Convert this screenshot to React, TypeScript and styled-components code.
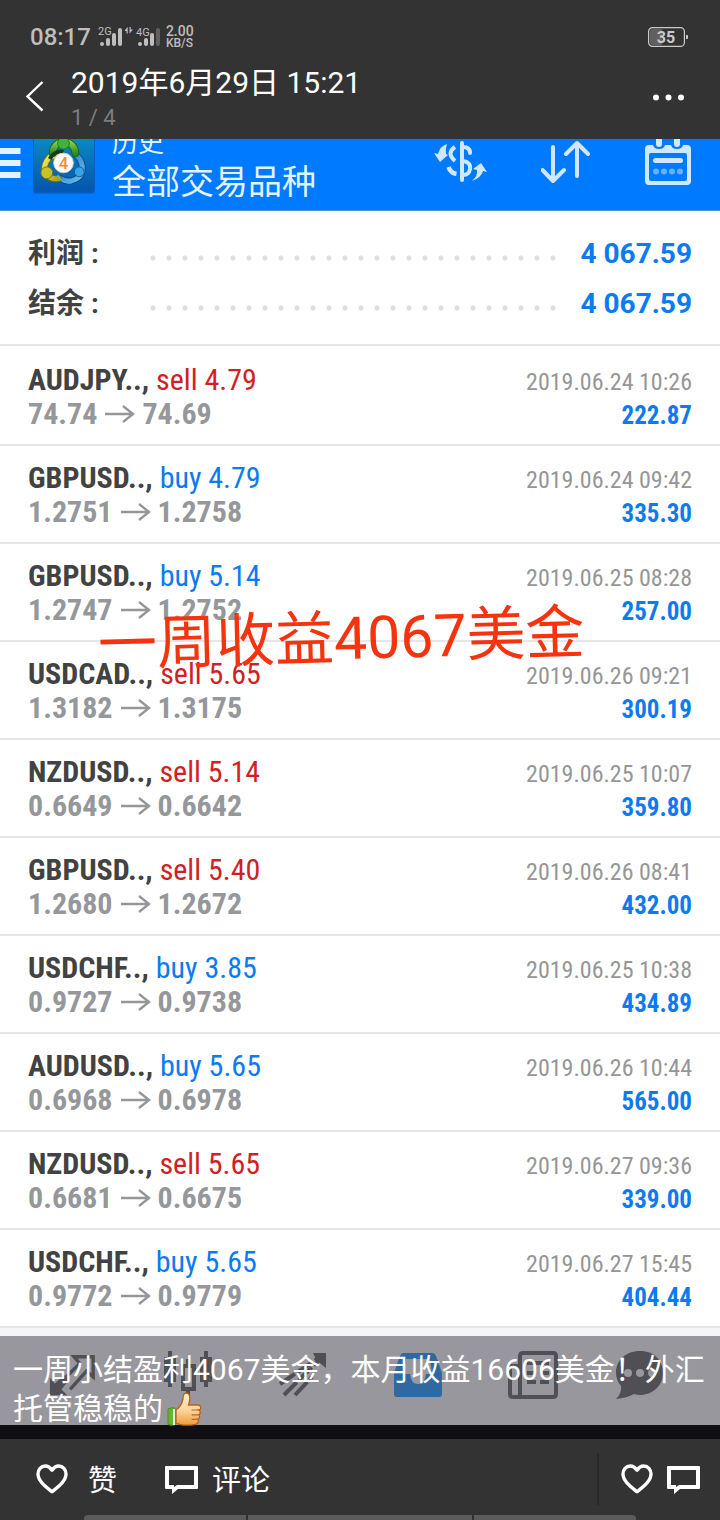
import React from "react";
import styled, { createGlobalStyle } from "styled-components";

const GlobalStyle = createGlobalStyle`
  *, *::before, *::after { box-sizing: border-box; }
  body {
    margin: 0;
    background: #333;
    font-family: Roboto, "Noto Sans CJK SC", sans-serif;
    color: #fff;
  }
  button { font: inherit; color: inherit; background: none; border: 0; padding: 0; cursor: pointer; }
  h1, h2, p, ul, dl, dd, dt { margin: 0; padding: 0; font-weight: 400; }
  svg { display: block; }
`;

const Page = styled.div`
  display: flex;
  flex-direction: column;
  min-height: 100vh;
  overflow: hidden;
`;

/* ---------- viewer header ---------- */
const Header = styled.header`
  background: #333;
`;
const StatusBar = styled.div`
  display: flex;
  align-items: center;
  height: 62px;
  padding: 12px 32px 0 30px;
  color: #bebebe;
`;
const Clock = styled.span`
  font-size: 24px;
  line-height: 28px;
  font-weight: 500;
`;
const Signals = styled.svg`
  margin-left: 7px;
`;
const Speed = styled.div`
  margin-left: 5px;
  font-size: 12px;
  line-height: 12px;
  font-weight: 500;
`;
const SpeedValue = styled.div`
  font-size: 14px;
`;
const Battery = styled.svg`
  margin-left: auto;
`;
const TitleBar = styled.div`
  display: flex;
  align-items: center;
  height: 77px;
  padding: 0 34px 8px 24px;
`;
const Titles = styled.div`
  flex: 1;
  margin-left: 24px;
`;
const Title = styled.h1`
  font-size: 30px;
  line-height: 42px;
`;
const Counter = styled.p`
  font-size: 22px;
  line-height: 28px;
  color: #7d7d7d;
`;
const IconButton = styled.button`
  display: flex;
  align-items: center;
  flex: none;
`;

/* ---------- trading screen ---------- */
const Screen = styled.main`
  position: relative;
  background: #fff;
`;
const AppBar = styled.div`
  display: flex;
  align-items: flex-end;
  height: 72px;
  padding-right: 29px;
  overflow: hidden;
  background: #007aff;
  border-bottom: 1px solid #4a94e6;
`;
const Logo = styled.svg`
  margin: 0 17px 16px 12px;
  flex: none;
`;
const AppTitles = styled.div`
  flex: 1;
  color: #e2f2ff;
  margin-bottom: 4px;
`;
const AppName = styled.p`
  font-size: 26px;
  line-height: 30px;
`;
const AppSection = styled.h2`
  font-size: 34px;
  line-height: 48px;
`;
const Tools = styled.div`
  display: flex;
  align-items: flex-start;
  height: 71px;
  gap: 54px;
`;

const Summary = styled.dl`
  padding: 18px 28px 15px;
  border-bottom: 2px solid #e6e6e6;
`;
const SummaryRow = styled.div`
  display: flex;
  align-items: center;
  height: 50px;
  font-size: 28px;
  line-height: 40px;
`;
const SummaryLabel = styled.dt`
  width: 117px;
  color: #424242;
  font-weight: 700;
`;
const Dots = styled.span`
  flex: 1;
  height: 6px;
  margin: 8px 24px 0 0;
  background: radial-gradient(circle at 8px 3px, #dedede 2px, transparent 3px) 0 0 / 16px 6px repeat-x;
`;
const SummaryValue = styled.dd`
  font-weight: 700;
  color: #0c7af0;
`;

const Trades = styled.ul`
  list-style: none;
  padding-top: 2px;
`;
const Trade = styled.li`
  display: flex;
  justify-content: space-between;
  height: 98px;
  padding: 15px 28px 0;
  border-bottom: 2px solid #e6e6e6;
  font-family: "Roboto Condensed", "Liberation Sans Narrow", Roboto, sans-serif;
  font-size: 30px;
  line-height: 34px;
  white-space: nowrap;
`;
const Symbol = styled.div`
  font-weight: 700;
  color: #424242;
`;
const Side = styled.span<{ $side: "buy" | "sell" }>`
  font-weight: 400;
  color: ${(p) => (p.$side === "buy" ? "#0c7af0" : "#d01f26")};
`;
const Prices = styled.div`
  display: flex;
  align-items: center;
  gap: 7px;
  font-weight: 700;
  color: #96979a;
`;
const Outcome = styled.div`
  font-size: 24px;
  text-align: right;
  padding-top: 2px;
`;
const When = styled.div`
  color: #969696;
`;
const Profit = styled.div`
  font-size: 25px;
  font-weight: 700;
  color: #0c7af0;
`;
const Stamp = styled.p`
  position: absolute;
  left: 50%;
  top: 460px;
  transform: translateX(-262px) rotate(-1.5deg);
  font-size: 59px;
  line-height: 80px;
  color: #f5330f;
  white-space: nowrap;
`;

const TabArea = styled.div`
  position: relative;
  border-top: 8px solid #f5f5f6;
  border-bottom: 14px solid #0f0e13;
`;
const Tabs = styled.nav`
  display: grid;
  grid-template-columns: repeat(6, 1fr);
  justify-items: center;
  height: 89px;
  padding: 14px 15px 0;
  background: #98979d;
  color: #4f4f55;
`;
const TabButton = styled.button`
  display: flex;
  align-items: flex-start;
`;
const Caption = styled.p`
  position: absolute;
  inset: 14px 0 auto;
  padding: 0 13px;
  font-size: 30px;
  line-height: 39px;
  overflow-wrap: anywhere;
`;
const Thumb = styled.svg`
  display: inline-block;
  vertical-align: -7px;
  margin-left: 4px;
`;

/* ---------- viewer footer ---------- */
const Footer = styled.footer`
  display: flex;
  align-items: center;
  height: 76px;
  padding: 4px 20px 0 36px;
  background: #333;
`;
const Action = styled.button`
  display: flex;
  align-items: center;
  gap: 14px;
  margin-right: 48px;
  font-size: 29px;
  line-height: 40px;
`;
const Label = styled.span`
  padding-top: 4px;
`;
const Likes = styled(Action)`
  gap: 20px;
`;
const Totals = styled.div`
  display: flex;
  align-items: center;
  gap: 14px;
  height: 52px;
  margin-left: auto;
  padding-left: 22px;
  border-left: 2px solid #292929;
`;
const Handles = styled.div`
  display: grid;
  grid-template-columns: 162fr 224fr 162fr;
  gap: 2px;
  height: 5px;
  margin: 0 84px;
  overflow: hidden;
  border-radius: 4px 4px 0 0;
`;
const Handle = styled.span`
  background: #5b5b5b;
`;

type TradeData = [string, "buy" | "sell", string, string, string, string, string];
const trades: TradeData[] = [
  ["AUDJPY..,", "sell", "4.79", "74.74", "74.69", "2019.06.24 10:26", "222.87"],
  ["GBPUSD..,", "buy", "4.79", "1.2751", "1.2758", "2019.06.24 09:42", "335.30"],
  ["GBPUSD..,", "buy", "5.14", "1.2747", "1.2752", "2019.06.25 08:28", "257.00"],
  ["USDCAD..,", "sell", "5.65", "1.3182", "1.3175", "2019.06.26 09:21", "300.19"],
  ["NZDUSD..,", "sell", "5.14", "0.6649", "0.6642", "2019.06.25 10:07", "359.80"],
  ["GBPUSD..,", "sell", "5.40", "1.2680", "1.2672", "2019.06.26 08:41", "432.00"],
  ["USDCHF..,", "buy", "3.85", "0.9727", "0.9738", "2019.06.25 10:38", "434.89"],
  ["AUDUSD..,", "buy", "5.65", "0.6968", "0.6978", "2019.06.26 10:44", "565.00"],
  ["NZDUSD..,", "sell", "5.65", "0.6681", "0.6675", "2019.06.27 09:36", "339.00"],
  ["USDCHF..,", "buy", "5.65", "0.9772", "0.9779", "2019.06.27 15:45", "404.44"],
];

const HeartIcon = () => (
  <svg width="32" height="30" viewBox="0 0 32 30" fill="none" stroke="#fff" strokeWidth="3.4" strokeLinejoin="round" aria-hidden="true">
    <path d="M16 6.2C13.8 3 11.6 2 9.3 2 5 2 2 5.6 2 10c0 7 7.5 12.500 14 17.800C22.500 22.500 30 17 30 10c0-4.400-3-8-7.300-8-2.300 0-4.500 1-6.700 4.200z" />
  </svg>
);

const CommentIcon = () => (
  <svg width="33" height="29" viewBox="0 0 33 29" aria-hidden="true">
    <path fill="#fff" fillRule="evenodd" d="M1 1h31a1 1 0 0 1 1 1v21a1 1 0 0 1-1 1H13l-6 5v-5H1a1 1 0 0 1-1-1V2a1 1 0 0 1 1-1zM4 5v15h5v2l3-2h17V5z" />
  </svg>
);

const ThumbIcon = () => (
  <Thumb width="35" height="34" viewBox="0 0 35 34" role="img" aria-label="thumbs up">
    <defs>
      <linearGradient id="skin" x1="0" y1="0" x2="0" y2="1">
        <stop offset="0" stopColor="#fff0d0" />
        <stop offset=".55" stopColor="#fcd39a" />
        <stop offset="1" stopColor="#f0993a" />
      </linearGradient>
    </defs>
    <path d="M1 17q4-2 7-1v17q-4 1-7-.5z" fill="#67b52e" stroke="#428318" strokeWidth=".8" />
    <path d="M6 17h2v16H6z" fill="#eaf6d8" />
    <path d="M9 18c4-3 6-6 7-11 0-4 1-6 3-6 4 0 5 4 2.500 12H31c3.500 0 3.500 4.500.8 5 2.200 1 1.900 4.500-.3 4.800 1.800 1.200 1.200 4.200-.8 4.400 1.500 1.400.6 4.300-2.200 5.100-5 1-12 1-16 0L9 31z" fill="url(#skin)" stroke="#b9611c" strokeWidth="1.300" />
    <path d="M25 18h6.500M25 22.800h6M25 27.300h5" stroke="#c2691f" strokeWidth="1.200" fill="none" strokeLinecap="round" />
  </Thumb>
);

const StatusSignals = () => (
  <Signals width="63" height="22" viewBox="0 0 63 22" aria-label="signal" role="img">
    <g fill="#bebebe">
      <text x="0" y="9" fontSize="11" fontFamily="Roboto, sans-serif">2G</text>
      <rect x="2" y="16" width="4" height="4" rx="2" />
      <rect x="8" y="12" width="4" height="8" rx="2" />
      <rect x="14" y="7" width="4" height="13" rx="2" />
      <rect x="20" y="2" width="4" height="18" rx="2" />
      <path d="M27 4l2.700-3v6.500h-1.200V5H27zM31.500 1h1.200v2.500H35l-3.500 4z" />
      <text x="38" y="10" fontSize="11" fontFamily="Roboto, sans-serif">4G</text>
      <rect x="40" y="16" width="4" height="4" rx="2" />
      <rect x="46" y="12" width="4" height="8" rx="2" />
      <rect x="52" y="7" width="4" height="13" rx="2" />
      <rect x="58" y="2" width="4" height="18" rx="2" fill="#606060" />
    </g>
  </Signals>
);

const BrokerLogo = () => (
  <Logo width="62" height="70" viewBox="0 0 63 70" role="img" aria-label="MetaTrader 4">
    <defs>
      <linearGradient id="tile" x1="0" y1="0" x2="0" y2="1">
        <stop offset="0" stopColor="#0a93c8" />
        <stop offset="1" stopColor="#0555ae" />
      </linearGradient>
      <linearGradient id="green" x1="0" y1="0" x2="0" y2="1">
        <stop offset="0" stopColor="#8fd044" />
        <stop offset="1" stopColor="#2e8c22" />
      </linearGradient>
      <linearGradient id="gold" x1="0" y1="0" x2="1" y2="1">
        <stop offset="0" stopColor="#f0ec66" />
        <stop offset="1" stopColor="#a9a313" />
      </linearGradient>
      <linearGradient id="sky" x1="0" y1="0" x2="1" y2="1">
        <stop offset="0" stopColor="#1470bd" />
        <stop offset="1" stopColor="#6cc2ee" />
      </linearGradient>
    </defs>
    <rect x="0" y="4" width="63" height="66" rx="3" fill="#0a5cb8" />
    <rect x="1" y="4" width="61" height="64" rx="3" fill="url(#tile)" />
    <g fill="none" strokeLinecap="round">
      <path d="M28 55a14 12 0 0 0 22-8q1-10-6-16" stroke="#0a4a92" strokeWidth="7" />
      <path d="M28 55a14 12 0 0 0 22-8q1-10-6-16" stroke="url(#sky)" strokeWidth="5" />
      <path d="M26 55q-8 1-14-5-2-10 5-17l8-2" stroke="#6f6d10" strokeWidth="7" />
      <path d="M26 55q-8 1-14-5-2-10 5-17l8-2" stroke="url(#gold)" strokeWidth="5" />
      <path d="M20 29a11 11 0 1 1 23 0" stroke="#1e641b" strokeWidth="8" />
      <path d="M20 29a11 11 0 1 1 23 0" stroke="url(#green)" strokeWidth="6" />
    </g>
    <path d="M17 35q4-8 14-8" stroke="#143c22" strokeWidth="4" fill="none" />
    <path d="M25 50q5 11 17 10-9 2-17-7z" fill="#54bdf2" />
    <circle cx="31" cy="19" r="6" fill="#3eb43c" stroke="#1c7a20" />
    <circle cx="14" cy="49" r="6" fill="#c8c32c" stroke="#77751a" />
    <circle cx="47" cy="48" r="5" fill="#3aa2e6" stroke="#14599c" />
    <circle cx="31" cy="39" r="10" fill="#fff" stroke="#d5cdb8" />
    <text x="31" y="45" fontSize="17" fontWeight="500" fontFamily="Roboto, sans-serif" fill="#f08a3c" textAnchor="middle">4</text>
  </Logo>
);

const SummaryLine = ({ label, value }: { label: string; value: string }) => (
  <SummaryRow>
    <SummaryLabel>{label}</SummaryLabel>
    <Dots />
    <SummaryValue>{value}</SummaryValue>
  </SummaryRow>
);

export default function App() {
  return (
    <Page>
      <GlobalStyle />
      <Header>
        <StatusBar>
          <Clock>08:17</Clock>
          <StatusSignals />
          <Speed>
            <SpeedValue>2.00</SpeedValue>
            KB/S
          </Speed>
          <Battery width="40" height="20" viewBox="0 0 40 20" role="img" aria-label="battery 35%">
            <rect x=".6" y=".6" width="35.800" height="18.800" rx="4" fill="none" stroke="#cacaca" strokeWidth="1.200" />
            <path d="M5 2h9v16H5a3 3 0 0 1-3-3V5a3 3 0 0 1 3-3z" fill="#606060" />
            <path d="M38 8h1a1 1 0 0 1 1 1v2a1 1 0 0 1-1 1h-1z" fill="#cacaca" />
            <text x="18" y="16" fontSize="16" fontWeight="700" fontFamily="Roboto, sans-serif" fill="#cacaca" textAnchor="middle">35</text>
          </Battery>
        </StatusBar>
        <TitleBar>
          <IconButton aria-label="Back">
            <svg width="23" height="32" viewBox="0 0 23 32" fill="none" stroke="#fff" strokeWidth="2.400">
              <path d="M18.500 1L3.500 15.500l15 14" />
            </svg>
          </IconButton>
          <Titles>
            <Title>2019年6月29日 15:21</Title>
            <Counter>1 / 4</Counter>
          </Titles>
          <IconButton aria-label="More">
            <svg width="34" height="8" viewBox="0 0 34 8" fill="#fff">
              <circle cx="4" cy="4.500" r="3" />
              <circle cx="16.500" cy="4.500" r="3" />
              <circle cx="29" cy="4.500" r="3" />
            </svg>
          </IconButton>
        </TitleBar>
      </Header>

      <Screen>
        <AppBar>
          <IconButton aria-label="Menu">
            <svg width="21" height="62" viewBox="0 0 21 62" fill="#e2f2ff">
              <path d="M0 0h20.500v6H0zM0 12h20.500v6H0zM0 24h20.500v6H0z" />
            </svg>
          </IconButton>
          <BrokerLogo />
          <AppTitles>
            <AppName>历史</AppName>
            <AppSection>全部交易品种</AppSection>
          </AppTitles>
          <Tools>
            <IconButton aria-label="Currency">
              <svg width="53" height="46" viewBox="0 0 53 46" fill="none" stroke="#cfe7ff" strokeLinecap="round">
                <path d="M28 4v37" strokeWidth="4" />
                <path d="M29 8q7 0 7 6M29 22q8 1 7 8-1 6-7 6" strokeWidth="4" />
                <path d="M21 8q-9 6 0 14" strokeWidth="4" strokeLinecap="butt" />
                <path d="M14.500 28q2 6 8 7" strokeWidth="4.500" strokeLinecap="butt" />
                <path d="M13 5Q11 10 12 15l2 1-8 7-6-9 4 1q2-8 9-10z" fill="#cfe7ff" stroke="none" />
                <path d="M38 42q6-5 5-11l-4-1 8-6 6 9-4-1q-2 7-11 10z" fill="#cfe7ff" stroke="none" />
              </svg>
            </IconButton>
            <IconButton aria-label="Sort">
              <svg width="50" height="46" viewBox="0 0 50 46" fill="none" stroke="#cfe7ff" strokeWidth="4" strokeLinecap="round" strokeLinejoin="round">
                <path d="M12 8v34M1.500 31L12 42l11-11M36 37V4M25 15L36 4l11 11" />
              </svg>
            </IconButton>
            <IconButton aria-label="Calendar">
              <svg width="46" height="48" viewBox="0 0 46 48">
                <path fill="#cfe7ff" fillRule="evenodd" d="M4 6h4q1 4 6 4t6-4h6q1 4 6 4t6-4h4q4 0 4 4v32q0 4-4 4H4q-4 0-4-4V10q0-4 4-4zM6 14q-2 0-2 2v24q0 2 2 2h34q2 0 2-2V16q0-2-2-2z" />
                <rect x="11" y="-3" width="6" height="11" rx="3" fill="#cfe7ff" />
                <rect x="29" y="-3" width="6" height="11" rx="3" fill="#cfe7ff" />
                <rect x="8" y="19" width="30" height="5" rx="2.500" fill="#cfe7ff" />
                <g fill="#66b1ff">
                  <circle cx="11" cy="32.500" r="3" />
                  <circle cx="19" cy="32.500" r="3" />
                  <circle cx="27" cy="32.500" r="3" />
                  <circle cx="35" cy="32.500" r="3" />
                </g>
              </svg>
            </IconButton>
          </Tools>
        </AppBar>

        <Summary>
          <SummaryLine label="利润 :" value="4 067.59" />
          <SummaryLine label="结余 :" value="4 067.59" />
        </Summary>

        <Trades>
          {trades.map(([symbol, side, lots, open, close, when, profit]) => (
            <Trade key={when}>
              <div>
                <Symbol>
                  {symbol} <Side $side={side}>{side} {lots}</Side>
                </Symbol>
                <Prices>
                  {open}
                  <svg width="31" height="18" viewBox="0 0 31 18" fill="none" stroke="#96979a" strokeWidth="2.400" role="img" aria-label="to">
                    <path d="M1 9h28M19 1l10 8-10 8" />
                  </svg>
                  {close}
                </Prices>
              </div>
              <Outcome>
                <When>{when}</When>
                <Profit>{profit}</Profit>
              </Outcome>
            </Trade>
          ))}
        </Trades>
        <Stamp>一周收益4067美金</Stamp>

        <TabArea>
          <Tabs>
            <TabButton aria-label="Quotes">
              <svg width="50" height="48" viewBox="0 0 52 48" fill="none" stroke="currentColor" strokeWidth="3.500">
                <path d="M2 28v18h18l-6-6 8-10-5-5-10 9z" fill="currentColor" stroke="none" />
                <path d="M23 40l17-19 7 6V6H27l6 7-16 16" />
              </svg>
            </TabButton>
            <TabButton aria-label="Charts">
              <svg width="50" height="50" viewBox="0 0 50 50" fill="currentColor">
                <path d="M5 1h4v6h4v25H9v5H5v-5H1V7h4zM41 1h4v6h4v25h-4v5h-4v-5h-4V7h4z" />
                <path d="M23 9h4v5h6v27h-6v7h-4v-7h-5V14h5zM22 18v19h7V18z" fillRule="evenodd" />
              </svg>
            </TabButton>
            <TabButton aria-label="Trade">
              <svg width="50" height="50" viewBox="0 0 50 50" fill="none" stroke="currentColor" strokeWidth="4">
                <path d="M2 34L42 7M6 45L42 9M17 45l17-18" strokeDasharray="18 3" />
                <path d="M35 3h13v15l-5-4-5-5z" fill="currentColor" stroke="none" />
              </svg>
            </TabButton>
            <TabButton aria-label="History">
              <svg width="50" height="50" viewBox="0 0 50 50" fill="#3068a1">
                <path d="M11 3h28q3 0 4 3l5 14q1 2 1 4v20q0 3-3 3H4q-3 0-3-3V24q0-2 1-4L7 6q1-3 4-3zM13 9q-2 12-2 15h6q1 10 8 10t8-10h6l-2-15z" fillRule="evenodd" />
              </svg>
            </TabButton>
            <TabButton aria-label="News">
              <svg width="50" height="50" viewBox="0 0 50 50" fill="none" stroke="currentColor" strokeWidth="4">
                <path d="M12 16H2v28q0 3 3 3h40q3 0 3-3V6q0-3-3-3H15q-3 0-3 3v38q0 3-3 3" />
                <path d="M19 13h22M19 23h9M32 23h9M19 32h9M32 32h9" />
              </svg>
            </TabButton>
            <TabButton aria-label="Messages">
              <svg width="68" height="50" viewBox="0 0 68 50" fill="currentColor">
                <path d="M26 1c14 0 23 9 23 22S38 45 26 45q-3 0-6-1-7 4-18 5 6-6 5-13Q2 30 2 23C2 10 12 1 26 1z" />
                <g fill="#98979d">
                  <circle cx="14" cy="23" r="4" />
                  <circle cx="26" cy="23" r="4" />
                  <circle cx="38" cy="23" r="4" />
                </g>
              </svg>
            </TabButton>
          </Tabs>
          <Caption>
            一周小结盈利4067美金，本月收益16606美金！外汇托管稳稳的
            <ThumbIcon />
          </Caption>
        </TabArea>
      </Screen>

      <Footer>
        <Likes>
          <HeartIcon />
          <Label>赞</Label>
        </Likes>
        <Action>
          <CommentIcon />
          <Label>评论</Label>
        </Action>
        <Totals>
          <IconButton aria-label="Likes"><HeartIcon /></IconButton>
          <IconButton aria-label="Comments"><CommentIcon /></IconButton>
        </Totals>
      </Footer>
      <Handles>
        <Handle />
        <Handle />
        <Handle />
      </Handles>
    </Page>
  );
}
